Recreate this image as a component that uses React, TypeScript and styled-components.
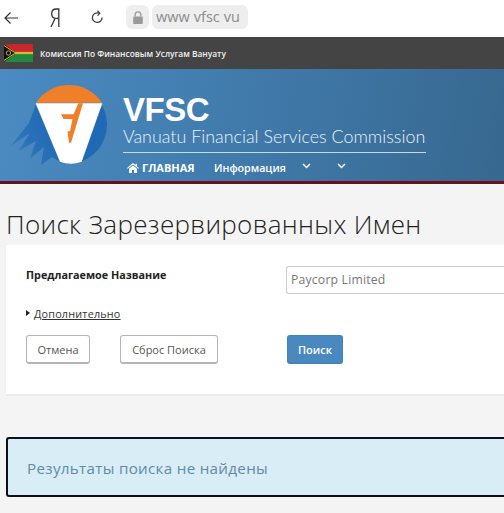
import React from 'react';
import styled, { createGlobalStyle } from 'styled-components';

const GlobalStyle = createGlobalStyle`
    html, body {
        margin: 0;
        padding: 0;
        width: 504px;
        height: 513px;
        overflow: hidden;
        background: #f4f4f4;
        font-family: "Open Sans", "Liberation Sans", sans-serif;
    }
`;

const Page = styled.div`
    width: 504px;
    height: 513px;
    overflow: hidden;
`;

const BrowserBar = styled.div`
    height: 37px;
    background: #fff;
    display: flex;
    align-items: flex-start;
`;

const NavIcon = styled.div<{ $width: number }>`
    width: ${(p) => p.$width}px;
    height: 35px;
    display: flex;
    align-items: center;
    justify-content: center;
    flex: none;
`;

const LockBox = styled.div`
    width: 23px;
    height: 24px;
    margin: 5px 3px 0 0;
    border-radius: 6px;
    background: #eeeeee;
    display: flex;
    align-items: center;
    justify-content: center;
`;

const Address = styled.div`
    height: 24px;
    margin-top: 5px;
    padding: 0 8px 0 4px;
    border-radius: 6px;
    background: #eeeeee;
    color: #8a8a8a;
    font-size: 14.5px;
    line-height: 24px;
    letter-spacing: 0.05px;
`;

const TopBar = styled.div`
    height: 32px;
    background: #444444;
    display: flex;
    align-items: center;
    padding-left: 4px;
    gap: 7px;
`;

const TopTitle = styled.span`
    color: #f2f2f2;
    font-size: 8.4px;
    font-weight: 600;
`;

const Header = styled.header`
    height: 112px;
    background: linear-gradient(100deg, #4a8bc2 0%, #3f78a8 55%, #37688f 100%);
    border-bottom: 3px solid #6a0f1c;
    display: flex;
    align-items: flex-start;
`;

const Logo = styled.svg`
    flex: none;
    margin: 14px 0 0 8px;
`;

const Brand = styled.div`
    margin: 26px 0 0 8px;
    width: 303px;
`;

const BrandName = styled.div`
    color: #fff;
    font-family: "Liberation Sans", sans-serif;
    font-size: 33px;
    font-weight: 700;
    line-height: 30px;
    letter-spacing: -0.5px;
`;

const BrandSub = styled.div`
    color: #eaf2f9;
    font-family: "Lato", sans-serif;
    font-size: 17.9px;
    font-weight: 300;
    line-height: 22px;
    white-space: nowrap;
    padding-bottom: 5px;
    border-bottom: 1px solid #c3dbee;
`;

const Menu = styled.nav`
    display: flex;
    align-items: center;
    height: 29px;
    padding-left: 4px;
`;

const MenuHome = styled.span`
    color: #fff;
    font-size: 11px;
    font-weight: 700;
    display: flex;
    align-items: center;
    gap: 3px;
    width: 87px;
    white-space: nowrap;
`;

const MenuItem = styled.span`
    color: #fff;
    font-size: 10.7px;
    font-weight: 600;
    width: 88px;
    white-space: nowrap;
`;

const Chevron = styled.svg`
    flex: none;
    margin-right: 26px;
    margin-bottom: 3px;
`;

const Title = styled.h1`
    margin: 0;
    padding: 23px 0 0 6px;
    height: 61px;
    box-sizing: border-box;
    color: #222;
    font-size: 26px;
    font-weight: 300;
    line-height: 34px;
    letter-spacing: 0.33px;
    white-space: nowrap;
`;

const Panel = styled.section`
    margin-left: 6px;
    height: 151px;
    box-sizing: border-box;
    background: #fff;
    border-bottom: 2px solid #ececec;
    padding: 21px 0 0 20px;
`;

const Row = styled.div`
    display: flex;
    align-items: flex-start;
`;

const FieldLabel = styled.label`
    width: 260px;
    flex: none;
    color: #222;
    font-size: 10.8px;
    font-weight: 700;
    line-height: 18px;
    white-space: nowrap;
`;

const Input = styled.div`
    flex: 1;
    height: 28px;
    box-sizing: border-box;
    border: 1px solid #cccccc;
    border-right: none;
    border-radius: 3px 0 0 3px;
    padding-left: 4px;
    color: #777;
    font-size: 12.2px;
    line-height: 26px;
    letter-spacing: 0.2px;
`;

const More = styled.div`
    display: flex;
    align-items: center;
    gap: 4px;
    margin-top: 10px;
    height: 18px;
`;

const Caret = styled.span`
    width: 0;
    height: 0;
    border-top: 3.5px solid transparent;
    border-bottom: 3.5px solid transparent;
    border-left: 4px solid #222;
`;

const MoreLink = styled.a`
    color: #333;
    font-size: 10.8px;
    text-decoration: underline;
    letter-spacing: 0.2px;
`;

const Buttons = styled.div`
    display: flex;
    margin-top: 13px;
`;

const Button = styled.button<{ $primary?: boolean }>`
    height: 29px;
    box-sizing: border-box;
    padding: 0;
    border-radius: 3px;
    border: 1px solid ${(p) => (p.$primary ? '#4281ba' : '#b5b5b5')};
    border-bottom-width: 2px;
    background: ${(p) => (p.$primary ? '#4a88c0' : '#fff')};
    color: ${(p) => (p.$primary ? '#fff' : '#555')};
    font-family: inherit;
    font-size: 11px;
    font-weight: ${(p) => (p.$primary ? 600 : 400)};
`;

const CancelButton = styled(Button)`
    width: 64px;
    margin-right: 30px;
`;

const ResetButton = styled(Button)`
    width: 98px;
    margin-right: 69px;
`;

const SearchButton = styled(Button)`
    width: 56px;
`;

const Alert = styled.div`
    margin: 41px 0 0 6px;
    height: 60px;
    box-sizing: border-box;
    background: #d9edf7;
    border: 2px solid #0d1117;
    border-right: none;
    border-radius: 3px 0 0 3px;
    padding-left: 19px;
    color: #5f8ba5;
    font-size: 15.2px;
    line-height: 59px;
    letter-spacing: 0.3px;
    white-space: nowrap;
`;

export default function App() {
    return (
        <Page>
            <GlobalStyle />
            <BrowserBar>
                <NavIcon $width={22}>
                    <svg width="16" height="14" viewBox="0 0 16 14" fill="none" stroke="#333" strokeWidth="1.2">
                        <path d="M15 7H2M7.5 1.5L2 7l5.5 5.5" />
                    </svg>
                </NavIcon>
                <NavIcon $width={66}>
                    <svg width="12" height="20" viewBox="0 0 12 20" fill="none" stroke="#333" strokeWidth="1.3">
                        <path d="M9.8 19V1H7.2C4 1 2.7 3.2 2.7 5.7S4 10.4 7.2 10.4h2.6M6 10.4L2 19" />
                    </svg>
                </NavIcon>
                <NavIcon $width={18}>
                    <svg width="13" height="15" viewBox="0 0 13 15" fill="none" stroke="#444" strokeWidth="1.3">
                        <path d="M11 7.5a4.8 4.8 0 1 1-3-4.3" />
                        <path d="M6.5 0.8L8.8 3.2 6.5 5.6" />
                    </svg>
                </NavIcon>
                <NavIcon $width={20} />
                <LockBox>
                    <svg width="10" height="13" viewBox="0 0 10 13" fill="#9a9a9a">
                        <path d="M1 5.5h8a.8.8 0 0 1 .8.8v5.9a.8.8 0 0 1-.8.8H1a.8.8 0 0 1-.8-.8V6.3A.8.8 0 0 1 1 5.5z" />
                        <path d="M2.2 5.5V3.6a2.8 2.8 0 0 1 5.6 0v1.9" fill="none" stroke="#9a9a9a" strokeWidth="1.3" />
                    </svg>
                </LockBox>
                <Address>www vfsc vu</Address>
            </BrowserBar>
            <TopBar>
                <svg width="29" height="18" viewBox="0 0 29 18">
                    <rect width="29" height="9" fill="#c8282c" />
                    <rect y="9" width="29" height="9" fill="#1f8a3c" />
                    <path d="M0 0L12 9 0 18z" fill="#111" />
                    <path d="M0 1.5L10.5 8.4H29M0 16.5L10.5 9.6H29" fill="none" stroke="#e8c33a" strokeWidth="1" />
                    <circle cx="4.5" cy="9" r="2.2" fill="none" stroke="#e8c33a" strokeWidth="0.8" />
                </svg>
                <TopTitle>Комиссия По Финансовым Услугам Вануату</TopTitle>
            </TopBar>
            <Header>
                <Logo width="107" height="84" viewBox="0 0 107 84">
                    <defs>
                        <linearGradient id="streak" x1="0" y1="1" x2="1" y2="0.4">
                            <stop offset="0" stopColor="#3f82bf" />
                            <stop offset="0.5" stopColor="#2a70b8" />
                            <stop offset="1" stopColor="#1f69b5" />
                        </linearGradient>
                    </defs>
                    <path d="M28 19.7A39.5 39.5 0 0 1 94 19.7Z" fill="#f07f2a" />
                    <path d="M94.3 23A39.5 39.5 0 0 1 72 79L80 40Z" fill="#1f69b5" />
                    <path d="M27.7 22L21 40 2 63.7 22 50 10.3 68 28 58 22 75.5 36 64 33 82 44 74 52 79Z" fill="url(#streak)" />
                    <path d="M27.7 20.3H94.3L73.7 78.7Q63 83 52 78.7Z" fill="#fff" />
                    <path d="M70.3 20.3H75L63 59.7H61L59.5 48.5 62 48 64.5 36H55.5L53 31.3H65.5Z" fill="#f07f2a" />
                </Logo>
                <Brand>
                    <BrandName>VFSC</BrandName>
                    <BrandSub>Vanuatu Financial Services Commission</BrandSub>
                    <Menu>
                        <MenuHome>
                            <svg width="12" height="10" viewBox="0 0 12 10" fill="#fff">
                                <path d="M6 0L0 5l.7.8L6 1.5l5.3 4.3.7-.8-2-1.6V.8H8.6v1.3zM2 5.8V10h3V7h2v3h3V5.8L6 2.6z" />
                            </svg>
                            ГЛАВНАЯ
                        </MenuHome>
                        <MenuItem>Информация</MenuItem>
                        <Chevron width="9" height="6" viewBox="0 0 9 6" fill="none" stroke="#fff" strokeWidth="1.5">
                            <path d="M1 1l3.5 3.5L8 1" />
                        </Chevron>
                        <Chevron width="9" height="6" viewBox="0 0 9 6" fill="none" stroke="#fff" strokeWidth="1.5">
                            <path d="M1 1l3.5 3.5L8 1" />
                        </Chevron>
                    </Menu>
                </Brand>
            </Header>
            <Title>Поиск Зарезервированных Имен</Title>
            <Panel>
                <Row>
                    <FieldLabel>Предлагаемое Название</FieldLabel>
                    <Input>Paycorp Limited</Input>
                </Row>
                <More>
                    <Caret />
                    <MoreLink>Дополнительно</MoreLink>
                </More>
                <Buttons>
                    <CancelButton>Отмена</CancelButton>
                    <ResetButton>Сброс Поиска</ResetButton>
                    <SearchButton $primary>Поиск</SearchButton>
                </Buttons>
            </Panel>
            <Alert>Результаты поиска не найдены</Alert>
        </Page>
    );
}
